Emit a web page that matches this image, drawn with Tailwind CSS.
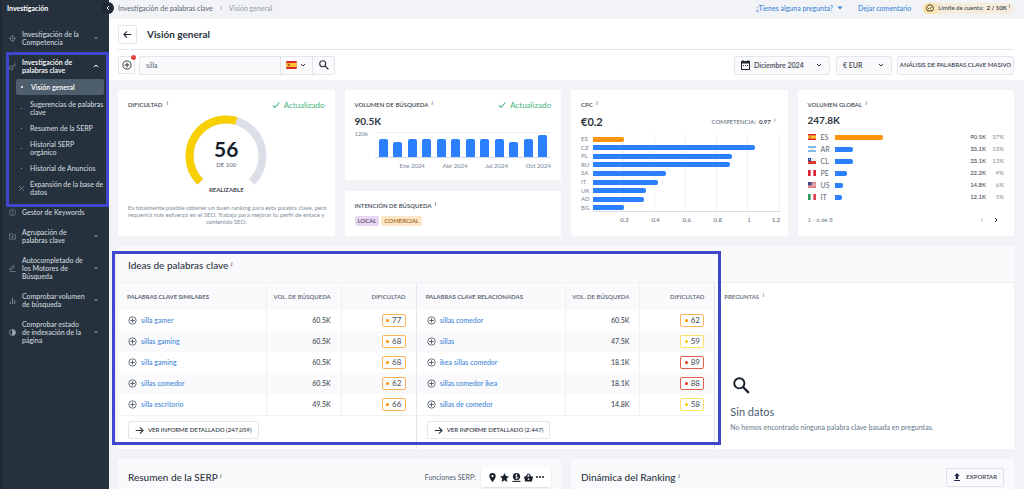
<!DOCTYPE html>
<html lang="es">
<head>
<meta charset="utf-8">
<title>Visión general</title>
<script src="https://cdn.jsdelivr.net/npm/@tailwindcss/browser@4"></script>
</head>
<body class="flex h-screen overflow-hidden bg-[#f2f3f7] font-['Lato','Open_Sans',sans-serif] text-[7px] leading-[8px] font-medium text-[#3f4853]">

<svg class="hidden" aria-hidden="true">
  <symbol id="down" viewBox="0 0 8 8"><path d="M2 3l2 2 2-2" fill="none" stroke="currentColor"/></symbol>
  <symbol id="up" viewBox="0 0 8 8"><path d="M2 5l2-2 2 2" fill="none" stroke="currentColor"/></symbol>
  <symbol id="left" viewBox="0 0 8 8"><path d="M5 2L3 4l2 2" fill="none" stroke="currentColor"/></symbol>
  <symbol id="right" viewBox="0 0 8 8"><path d="M3 2l2 2-2 2" fill="none" stroke="currentColor"/></symbol>
  <symbol id="plus" viewBox="0 0 10 10"><circle cx="5" cy="5" r="4.1" fill="none" stroke="currentColor" stroke-width=".9"/><path d="M5 2.6v4.8M2.6 5h4.8" stroke="currentColor"/></symbol>
  <symbol id="arrow" viewBox="0 0 10 10"><path d="M.8 5H9M5.5 1.500L9 5 5.500 8.500" fill="none" stroke="currentColor" stroke-width="1.200"/></symbol>
  <symbol id="search" viewBox="0 0 18 18"><circle cx="6.700" cy="6.700" r="5.400" fill="none" stroke="currentColor" stroke-width="2"/><path d="M10.600 10.600l6.200 6.200" stroke="currentColor" stroke-width="2.400"/></symbol>
  <symbol id="check" viewBox="0 0 8 8"><path d="M.8 4.300L3 6.500 7.300 1.500" fill="none" stroke="currentColor" stroke-width="1.100"/></symbol>
  <symbol id="es" viewBox="0 0 12 9"><path fill="#d8262c" d="M0 0h12v9H0z"/><path fill="#fbc52d" d="M0 2.200h12v4.600H0z"/><path fill="#b5532a" d="M2.200 3.200h2v2.400h-2z"/></symbol>
  <symbol id="ar" viewBox="0 0 12 9"><path fill="#7fbbe6" d="M0 0h12v9H0z"/><path fill="#fff" d="M0 3h12v3H0z"/><circle cx="6" cy="4.500" r="1" fill="#f2b632"/></symbol>
  <symbol id="cl" viewBox="0 0 12 9"><path fill="#eceef2" d="M0 0h12v4.500H0z"/><path fill="#d33a30" d="M0 4.500h12V9H0z"/><path fill="#274a9c" d="M0 0h4.500v4.500H0z"/><circle cx="2.200" cy="2.200" r=".8" fill="#fff"/></symbol>
  <symbol id="pe" viewBox="0 0 12 9"><path fill="#fff" d="M0 0h12v9H0z"/><path fill="#dc2338" d="M0 0h4v9H0zM8 0h4v9H8z"/></symbol>
  <symbol id="us" viewBox="0 0 12 9"><path fill="#f6e4e6" d="M0 0h12v9H0z"/><path stroke="#d0404f" d="M0 .5h12M0 2.500h12M0 4.500h12M0 6.500h12M0 8.500h12"/><path fill="#3a4580" d="M0 0h5.500v5H0z"/></symbol>
  <symbol id="it" viewBox="0 0 12 9"><path fill="#fff" d="M0 0h12v9H0z"/><path fill="#2f9e5b" d="M0 0h4v9H0z"/><path fill="#dc4450" d="M8 0h4v9H8z"/></symbol>
</svg>

<!-- Barra lateral -->
<aside class="relative z-10 w-[109px] shrink-0 border-l-2 border-[#1f2933] bg-[#25323e] pt-1 text-[#cfd6dc]">
  <h2 class="pl-[5px] font-bold text-white">Investigación</h2>
  <nav class="mt-[18px] flex flex-col gap-3 pr-[9px] pl-[7px] whitespace-nowrap [&_a]:block">
    <div class="flex items-center gap-[6px]"><svg class="size-[7px] shrink-0 text-[#7e8995]" viewBox="0 0 8 8" fill="none" stroke="currentColor" stroke-width=".8"><circle cx="4" cy="4" r="2.600"/><circle cx="4" cy="4" r=".8"/><path d="M4 0v1.500M4 6.500V8M0 4h1.500M6.500 4H8"/></svg><a href="#" class="flex-1">Investigación de la<br>Competencia</a><svg class="size-2 text-[#8b96a1]"><use href="#down"/></svg></div>
    <div>
      <div class="flex items-center gap-[6px] font-semibold text-white"><svg class="size-[7px] shrink-0 text-[#8b96a1]" viewBox="0 0 8 8" fill="none" stroke="currentColor" stroke-width=".8"><circle cx="2.500" cy="5.500" r="2"/><path d="M4 4l3.500-3.500M5.500 2.500L7 4M7 1l1 1"/></svg><a href="#" class="flex-1">Investigación de<br>palabras clave</a><svg class="size-2"><use href="#up"/></svg></div>
      <ul class="mt-[5px] -mr-1 ml-[7px] flex flex-col gap-2">
        <li class="-mb-[3px] flex h-4 items-center gap-2 rounded-xs bg-[#4f5e6d] pl-1 font-semibold text-white"><i class="ml-px size-[2px] rounded-full bg-white"></i><a href="#">Visión general</a></li>
        <li class="flex items-center gap-2 pl-[5px]"><i class="size-px bg-[#8b96a1]"></i><a href="#" class="-mr-1">Sugerencias de palabras<br>clave</a></li>
        <li class="flex items-center gap-2 pl-[5px]"><i class="size-px bg-[#8b96a1]"></i><a href="#">Resumen de la SERP</a></li>
        <li class="flex items-center gap-2 pl-[5px]"><i class="size-px bg-[#8b96a1]"></i><a href="#">Historial SERP<br>orgánico</a></li>
        <li class="flex items-center gap-2 pl-[5px]"><i class="size-px bg-[#8b96a1]"></i><a href="#">Historial de Anuncios</a></li>
        <li class="flex items-center gap-[6px] pl-[3px]"><svg class="size-[5px] shrink-0 text-[#8b96a1]" viewBox="0 0 6 6" stroke="currentColor" stroke-width=".8"><path d="M0 0l2 2M6 0L4 2M0 6l2-2M6 6L4 4M2 3h2M3 2v2"/></svg><a href="#">Expansión de la base de<br>datos</a></li>
      </ul>
    </div>
    <div class="flex items-center gap-[6px]"><svg class="size-[7px] shrink-0 text-[#7e8995]" viewBox="0 0 8 8" fill="none" stroke="currentColor" stroke-width=".8"><circle cx="4" cy="4" r="3.500"/><path d="M4 2v2.500M4 5.200v1"/></svg><a href="#" class="flex-1">Gestor de Keywords</a></div>
    <div class="flex items-center gap-[6px]"><svg class="size-[7px] shrink-0 text-[#7e8995]" viewBox="0 0 8 8" fill="none" stroke="currentColor" stroke-width=".8"><path d="M.5 1h2.500l.8 1h3.700v5H.5zM4 3v3M2.500 4.500h3"/></svg><a href="#" class="flex-1">Agrupación de<br>palabras clave</a><svg class="size-2 text-[#8b96a1]"><use href="#down"/></svg></div>
    <div class="flex items-center gap-[6px]"><svg class="size-[7px] shrink-0 text-[#8b96a1]" viewBox="0 0 8 8" fill="none" stroke="currentColor" stroke-width=".8"><path d="M1 5.500l.3-1.700L4.800.600l1.400 1.300-3.400 3.300zM1 7.500h6.500"/></svg><a href="#" class="flex-1">Autocompletado de<br>los Motores de<br>Búsqueda</a><svg class="size-2 text-[#8b96a1]"><use href="#down"/></svg></div>
    <div class="flex items-center gap-[6px]"><svg class="size-[7px] shrink-0 text-[#8b96a1]" viewBox="0 0 8 8" stroke="currentColor"><path d="M1.500 8V5M4 8V1M6.500 8V3.500"/></svg><a href="#" class="flex-1">Comprobar volumen<br>de búsqueda</a><svg class="size-2 text-[#8b96a1]"><use href="#down"/></svg></div>
    <div class="flex items-center gap-[6px]"><svg class="size-[7px] shrink-0 text-[#a0aab4]" viewBox="0 0 8 8" fill="none" stroke="currentColor" stroke-width=".8"><circle cx="4" cy="4" r="3.500"/><path d="M4 1a3 3 0 010 6z" fill="currentColor"/></svg><a href="#" class="flex-1">Comprobar estado<br>de indexación de la<br>página</a><svg class="size-2 text-[#8b96a1]"><use href="#down"/></svg></div>
  </nav>
  <button aria-label="Contraer menú" class="absolute top-[2px] -right-[5px] grid size-3 place-items-center rounded-full bg-[#1d2935] text-white"><svg class="size-2"><use href="#left"/></svg></button>
  <div class="pointer-events-none absolute top-[52px] right-0 left-1 h-[155px] border-[3px] border-[#3f48cc]"></div>
</aside>

<div class="relative flex min-w-0 flex-1 flex-col">
  <!-- Barra superior -->
  <div class="flex h-[19px] shrink-0 items-center justify-between pr-[10px] pb-[3px] pl-[9px]">
    <div class="flex items-center gap-1"><a href="#" class="text-[#66707c]">Investigación de palabras clave</a><svg class="size-2 text-[#b9bec6]"><use href="#right"/></svg><span class="text-[#98a1ab]">Visión general</span></div>
    <div class="flex items-center text-[#3d87d6]">
      <a href="#" class="flex items-center gap-1">¿Tienes alguna pregunta?<svg class="size-[6px]" viewBox="0 0 6 6"><path d="M.5 1.500h5L3 4.500z" fill="currentColor"/></svg></a>
      <a href="#" class="ml-[15px]">Dejar comentario</a>
      <span class="ml-3 flex h-[11px] items-center gap-1 rounded-full bg-linear-to-r from-[#fbe0a0] from-10% to-[#f5ecdc] to-20% pr-1 pl-[3px] text-[6px] text-[#3f4853]"><svg class="size-2" viewBox="0 0 8 8" fill="none" stroke="#2c343d" stroke-width=".9"><path d="M1.500 6.800a3.500 3.500 0 115 0zM4 4.800l1.500-1.800M2 4.500h.8"/></svg><span>Límite de cuenta: &nbsp;<b>2 / 10K</b><sup class="pl-[2px] text-[5px] italic">i</sup></span></span>
    </div>
  </div>

  <header class="shrink-0 bg-white pr-[10px] pl-[9px]">
    <div class="flex h-[31px] items-center gap-[10px] border-b border-[#e4e6ec]">
      <button aria-label="Volver" class="grid size-[19px] place-items-center rounded-xs border border-[#e4e6ec]"><svg class="size-[9px] -scale-x-100 text-[#1f2833]"><use href="#arrow"/></svg></button>
      <h1 class="text-[10px] leading-3 font-bold text-[#2c343d]">Visión general</h1>
    </div>
    <div class="flex h-[30px] items-center text-[#2c343d]">
      <button aria-label="Añadir" class="relative grid h-[18px] w-[17px] place-items-center rounded-xs border border-[#e4e6ec]"><svg class="size-[10px]"><use href="#plus"/></svg><i class="absolute -top-[2px] -right-[2px] size-[5px] rounded-full bg-[#e5493d]"></i></button>
      <div class="ml-1 flex h-[19px] rounded-xs border border-[#e4e6ec] bg-[#fafafd]">
        <input aria-label="Palabra clave" value="silla" class="w-[140px] px-[6px] text-[#66707c] outline-none">
        <button aria-label="País: España" class="flex w-[33px] items-center justify-center gap-[2px] border-x border-[#e4e6ec]"><svg class="h-2 w-[11px]" viewBox="0 0 12 9"><use href="#es"/></svg><svg class="size-2"><use href="#down"/></svg></button>
        <button aria-label="Buscar" class="grid w-[21px] place-items-center"><svg class="size-[10px]"><use href="#search"/></svg></button>
      </div>
      <div class="relative ml-auto flex h-[19px] w-24 items-center rounded-xs border border-[#e4e6ec] bg-[#fafafd]">
        <svg class="ml-[6px] h-[10px] w-[9px] shrink-0" viewBox="0 0 9 10"><path fill="#1f2833" fill-rule="evenodd" d="M1.500 0h1v1h4V0h1v1H9v9H0V1h1.500zM1 3.500V9h7V3.500zM2 5h1v1H2zM4 5h1v1H4zM6 5h1v1H6z"/></svg>
        <select aria-label="Mes" class="h-full w-full appearance-none pl-1 font-semibold text-[#3f4853]"><option>Diciembre 2024</option></select>
        <svg class="pointer-events-none absolute right-[6px] size-2"><use href="#down"/></svg>
      </div>
      <div class="relative ml-[6px] flex h-[19px] w-[56px] items-center rounded-xs border border-[#e4e6ec] bg-[#fafafd]">
        <select aria-label="Moneda" class="h-full w-full appearance-none pl-[6px] font-semibold text-[#3f4853]"><option>€ EUR</option></select>
        <svg class="pointer-events-none absolute right-[6px] size-2"><use href="#down"/></svg>
      </div>
      <button class="ml-[5px] h-[19px] w-[117px] rounded-xs border border-[#e4e6ec] bg-[#fafafd] text-[6px] font-medium whitespace-nowrap">ANÁLISIS DE PALABRAS CLAVE MASIVO</button>
    </div>
  </header>

  <main class="flex flex-col gap-[10px] pt-[10px] pr-[10px] pl-[9px]">
    <div class="grid grid-cols-4 gap-[10px]">
      <!-- Dificultad -->
      <section class="flex h-[146px] flex-col rounded-xs bg-white px-[10px] pt-[9px]">
        <div class="flex items-center justify-between"><h3 class="text-[6px] font-semibold">DIFICULTAD <sup class="pl-[3px] text-[5px] italic">i</sup></h3><span class="flex items-center gap-1 text-[8px] leading-3 font-normal text-[#45b37c]"><svg class="size-2"><use href="#check"/></svg>Actualizado</span></div>
        <div class="relative mx-auto mt-1 w-[82px] text-center">
          <svg class="block h-[71px] w-full" viewBox="0 0 82 71" fill="none" stroke-width="8"><path d="M15.200 66.800A36.500 36.500 0 1 1 66.800 66.800" stroke="#dcdee8"/><path d="M15.200 66.800A36.500 36.500 0 1 1 66.800 66.800" stroke="#f8cf00" pathLength="100" stroke-dasharray="56 100"/></svg>
          <div class="absolute inset-x-0 top-[23px]"><b class="block text-[21px] leading-[21px] text-[#171f2b]">56</b><span class="mt-[2px] block text-[6px] leading-[7px] text-[#66707c]">DE 100</span></div>
        </div>
        <p class="text-center text-[6px] font-bold">REALIZABLE</p>
        <p class="mt-[10px] text-center text-[6px] leading-[7px] font-normal whitespace-nowrap text-[#7d8d9a]">Es totalmente posible obtener un buen ranking para esta palabra clave, pero<br>requerirá más esfuerzo en el SEO. Trabaja para mejorar tu perfil de enlace y<br>contenido SEO.</p>
      </section>

      <!-- Volumen e intención -->
      <div class="flex flex-col gap-[11px]">
        <section class="h-[90px] rounded-xs bg-white px-[10px] pt-[9px]">
          <div class="flex items-center justify-between"><h3 class="text-[6px] font-semibold">VOLUMEN DE BÚSQUEDA <sup class="pl-[2px] text-[5px] italic">i</sup></h3><span class="flex items-center gap-1 text-[8px] leading-3 font-normal text-[#45b37c]"><svg class="size-2"><use href="#check"/></svg>Actualizado</span></div>
          <b class="mt-[4px] block text-[10px] leading-3 text-[#2c343d]">90.5K</b>
          <div class="mt-[5px] flex"><span class="w-5 shrink-0 text-[6px] leading-[4px] text-[#7d8d9a]">120k</span><div id="vol" class="flex h-[26px] flex-1 items-end justify-between border-y border-t-[#eceef3] border-b-[#d5dae6] px-1"></div></div>
          <div class="mt-1 flex justify-between pl-[45px] text-[6px] text-[#7d8d9a]"><span>Ene 2024</span><span>Abr 2024</span><span>Jul 2024</span><span>Oct 2024</span></div>
        </section>
        <section class="h-[45px] rounded-xs bg-white px-[10px] pt-[11px]">
          <h3 class="text-[6px] font-semibold">INTENCIÓN DE BÚSQUEDA <sup class="pl-[2px] text-[5px] italic">i</sup></h3>
          <div class="mt-[6px] flex gap-[2px] text-[6px] leading-[10px] font-semibold"><span class="rounded-xs bg-[#e6d8ef] px-[3px] text-[#65457c]">LOCAL</span><span class="rounded-xs bg-[#fde6c6] px-[3px] text-[#9b6423]">COMERCIAL</span></div>
        </section>
      </div>

      <!-- CPC -->
      <section class="rounded-xs bg-white px-[10px] pt-[11px]">
        <h3 class="text-[6px] font-semibold">CPC <sup class="pl-[2px] text-[5px] italic">i</sup></h3>
        <div class="mt-[7px] flex items-center justify-between pr-[2px]"><b class="text-[11px] leading-3 text-[#2c343d]">€0.2</b><span class="text-[6px] text-[#66707c]">COMPETENCIA: &nbsp;<b class="text-[#3f4853]">0.97</b> <sup class="pl-[2px] text-[5px] italic">i</sup></span></div>
        <div class="relative mt-[7px] h-[77px] pl-3">
          <div class="absolute inset-y-0 right-[-2px] left-3 grid grid-cols-6 border-b border-[#d9dde8] [&>i]:border-r [&>i]:border-[#f0f1f5]"><i></i><i></i><i></i><i></i><i></i><i></i></div>
          <div id="cpc" class="relative -mr-[2px] grid h-full grid-rows-9"></div>
        </div>
        <div class="mt-1 -mr-[18px] grid grid-cols-6 pl-7 text-center text-[6px] text-[#66707c]"><span>0.2</span><span>0.4</span><span>0.6</span><span>0.8</span><span>1</span><span class="pr-2">1.2</span></div>
      </section>

      <!-- Volumen global -->
      <section class="rounded-xs bg-white px-[10px] pt-[11px]">
        <h3 class="text-[6px] font-semibold">VOLUMEN GLOBAL <sup class="pl-[2px] text-[5px] italic">i</sup></h3>
        <b class="mt-[5px] block text-[10px] leading-3 text-[#2c343d]">247.8K</b>
        <table class="mt-[5px] w-full text-[6px]"><tbody id="global"></tbody></table>
        <div class="mt-[13px] flex items-center text-[6px] text-[#7d8d9a]">1 - 6 de 8<button aria-label="Anterior" class="ml-auto text-[#b9bec6]"><svg class="size-2"><use href="#left"/></svg></button><button aria-label="Siguiente" class="mr-1 ml-[6px] text-[#1f2833]"><svg class="size-2"><use href="#right"/></svg></button></div>
      </section>
    </div>

    <!-- Ideas -->
    <section class="rounded-xs bg-white">
      <h2 class="h-[36px] rounded-t-xs bg-[#fafafd] px-[10px] pt-3 text-[10px] leading-[14px] text-[#2c343d]">Ideas de palabras clave <sup class="text-[6px] italic">i</sup></h2>
      <div class="grid grid-cols-3 border-t border-[#f0f1f5]">
        <div class="border-r border-[#e4e6ec]">
          <table class="w-full table-fixed"><thead><tr class="h-[27px] bg-[#fafafd] text-[6px] text-[#5c6875]"><th class="w-1/2 pl-[9px] text-left font-bold">PALABRAS CLAVE SIMILARES</th><th class="w-1/4 border-x border-[#f0f1f5] pr-[10px] text-right font-semibold whitespace-nowrap">VOL. DE BÚSQUEDA</th><th class="w-1/4 pr-[10px] text-right font-semibold">DIFICULTAD</th></tr></thead><tbody id="sim"></tbody></table>
          <div class="border-t border-[#f0f1f5] px-[10px] pt-[5px] pb-[10px]"><button class="flex h-[18px] items-center gap-1 rounded-xs border border-[#e4e6ec] px-[6px] text-[6px] font-medium text-[#2c343d]"><svg class="size-[9px]"><use href="#arrow"/></svg>VER INFORME DETALLADO (247,059)</button></div>
        </div>
        <div class="border-r border-[#e4e6ec]">
          <table class="w-full table-fixed"><thead><tr class="h-[27px] bg-[#fafafd] text-[6px] text-[#5c6875]"><th class="w-1/2 pl-[9px] text-left font-bold">PALABRAS CLAVE RELACIONADAS</th><th class="w-1/4 border-x border-[#f0f1f5] pr-[10px] text-right font-semibold whitespace-nowrap">VOL. DE BÚSQUEDA</th><th class="w-1/4 pr-[10px] text-right font-semibold">DIFICULTAD</th></tr></thead><tbody id="rel"></tbody></table>
          <div class="border-t border-[#f0f1f5] px-[10px] pt-[5px] pb-[10px]"><button class="flex h-[18px] items-center gap-1 rounded-xs border border-[#e4e6ec] px-[6px] text-[6px] font-medium text-[#2c343d]"><svg class="size-[9px]"><use href="#arrow"/></svg>VER INFORME DETALLADO (2,447)</button></div>
        </div>
        <div class="pt-[10px] pl-[9px]">
          <h3 class="text-[6px] font-semibold text-[#5c6875]">PREGUNTAS <sup class="pl-[2px] text-[5px] italic">i</sup></h3>
          <div class="mt-[76px] pl-[6px]">
            <svg class="ml-[3px] size-[17px] text-[#171f2b]"><use href="#search"/></svg>
            <p class="mt-[11px] text-[11px] leading-[14px] font-normal text-[#4c5a70]">Sin datos</p>
            <p class="mt-1 text-[#6f8290]">No hemos encontrado ninguna palabra clave basada en preguntas.</p>
          </div>
        </div>
      </div>
    </section>

    <div class="grid grid-cols-2 gap-[10px]">
      <section class="flex h-10 items-center rounded-xs bg-[#fafafd] px-[10px] pb-1">
        <h2 class="flex-1 text-[10px] leading-[14px] text-[#2c343d]">Resumen de la SERP <sup class="text-[6px] italic">i</sup></h2>
        <span class="text-[#5c6875]">Funciones SERP:</span>
        <span class="ml-[5px] flex h-5 items-center gap-[3px] rounded-xs bg-white px-[7px] text-[#171f2b] shadow-sm">
          <svg class="size-[9px]" viewBox="0 0 10 10"><path fill="currentColor" fill-rule="evenodd" d="M5 0a3.500 3.500 0 00-3.500 3.500C1.500 6 5 10 5 10s3.500-4 3.500-6.500A3.500 3.500 0 005 0zm0 2.300a1.200 1.200 0 110 2.400 1.200 1.200 0 010-2.400z"/></svg>
          <svg class="size-[9px]" viewBox="0 0 10 10"><path fill="currentColor" d="M5 0l1.500 3.400L10 3.800 7.400 6.200 8.200 10 5 8 1.800 10l.8-3.800L0 3.800l3.500-.4z"/></svg>
          <svg class="size-[9px]" viewBox="0 0 10 10"><circle cx="5" cy="4" r="4" fill="currentColor"/><path d="M6.300 2.300Q3.800 1.600 3.800 3T6.200 5 3.700 5.900M5 1v6" fill="none" stroke="#fff" stroke-width=".7"/><path d="M.5 9.300h9" stroke="currentColor" stroke-width="1.200"/></svg>
          <svg class="size-[9px]" viewBox="0 0 10 10"><path fill="currentColor" fill-rule="evenodd" d="M0 4h1.800L4.300.500l1 .6L3.300 4h3.400l-2-2.900 1-.6L8.200 4H10L8.800 9.500H1.200zM5 5.700a1 1 0 100 2 1 1 0 000-2z"/></svg>
          <svg class="size-[8px]" viewBox="0 0 8 8" fill="currentColor"><circle cx="1" cy="4" r="1"/><circle cx="4" cy="4" r="1"/><circle cx="7" cy="4" r="1"/></svg>
        </span>
      </section>
      <section class="flex h-10 items-center rounded-xs bg-[#fafafd] px-[10px] pb-1">
        <h2 class="flex-1 text-[10px] leading-[14px] text-[#2c343d]">Dinámica del Ranking <sup class="text-[6px] italic">i</sup></h2>
        <button class="flex h-[19px] items-center gap-[5px] rounded-xs border border-[#dfe2e9] px-[6px] text-[6px] font-semibold"><svg class="size-[8px]" viewBox="0 0 8 8" fill="#1f2b45"><path d="M4 0l2.800 3H5.200v3H2.800V3H1.200zM1 7h6v1H1z"/></svg>EXPORTAR</button>
      </section>
    </div>
  </main>

  <div class="pointer-events-none absolute top-[251px] right-[303px] left-[3px] h-[194px] border-[3px] border-[#3f48cc]"></div>
</div>

<script>
const put = (id, html) => { document.getElementById(id).innerHTML = html; };
put('vol', [18,15,18,18,18,18,18,18,18,15,18,22].map(h => `<i class="w-[9px] rounded-t-xs bg-[#2a80ff]" style="height:${h}px"></i>`).join(''));
put('cpc', [['ES',16.6],['CZ',87.1],['PL',74.6],['RU',73.7],['SA',38.9],['IT',34.6],['UK',28.2],['AD',27.3],['BG',16.6]].map(([c,w],i) =>
  `<div class="-ml-3 flex items-center"><span class="w-3 pr-[2px] text-[6px] leading-[6px] text-[#7d8d9a]">${c}</span><span class="flex-1"><i class="block h-[5px] rounded-r-xs ${i ? 'bg-[#2a80ff]' : 'bg-[#ff9310]'}" style="width:${w}%"></i></span></div>`).join(''));
put('global', [['es','90.5K',48,'37%'],['ar','33.1K',18,'13%'],['cl','33.1K',18,'13%'],['pe','22.2K',12,'9%'],['us','14.8K',8,'6%'],['it','12.1K',7,'5%']].map(([c,v,w,p],i) =>
  `<tr class="h-3"><td class="w-[13px]"><svg class="h-[6px] w-2" viewBox="0 0 12 9"><use href="#${c}"/></svg></td><td class="w-[14px] text-[7px] text-[#66707c] uppercase">${c}</td><td><i class="block h-[5px] rounded-r-xs ${i ? 'bg-[#2a80ff]' : 'bg-[#ff9310]'}" style="width:${w}px"></i></td><td class="text-right">${v}</td><td class="w-[18px] text-right text-[#8a949e]">${p}</td></tr>`).join(''));
const tone = n => n > 79 ? ['border-[#e2604f]','bg-[#dc3a24]'] : n < 60 ? ['border-[#fbe06a]','bg-[#f5c800]'] : ['border-[#fdb35c]','bg-[#ff8c00]'];
const rows = list => list.map(([k,v,d]) => `<tr class="h-[21px] even:bg-[#fafafd]"><td class="pb-px pl-[10px]"><span class="flex items-center gap-[4px]"><button aria-label="Añadir ${k}" class="text-[#4c5661]"><svg class="size-[9px]"><use href="#plus"/></svg></button><a href="#" class="text-[#3d87d6]">${k}</a></span></td><td class="border-x border-[#f0f1f5] pr-[10px] pb-px text-right">${v}</td><td class="pr-[10px] pb-px"><span class="ml-auto flex h-[13px] w-6 items-center justify-center gap-[3px] rounded-xs border bg-white text-[8px] font-normal ${tone(d)[0]}"><i class="size-[3px] rounded-full ${tone(d)[1]}"></i>${d}</span></td></tr>`).join('');
put('sim', rows([['silla gamer','60.5K',77],['sillas gaming','60.5K',68],['silla gaming','60.5K',68],['sillas comedor','60.5K',62],['silla escritorio','49.5K',66]]));
put('rel', rows([['sillas comedor','60.5K',62],['sillas','47.5K',59],['ikea sillas comedor','18.1K',89],['sillas comedor ikea','18.1K',88],['sillas de comedor','14.8K',58]]));
</script>
</body>
</html>
